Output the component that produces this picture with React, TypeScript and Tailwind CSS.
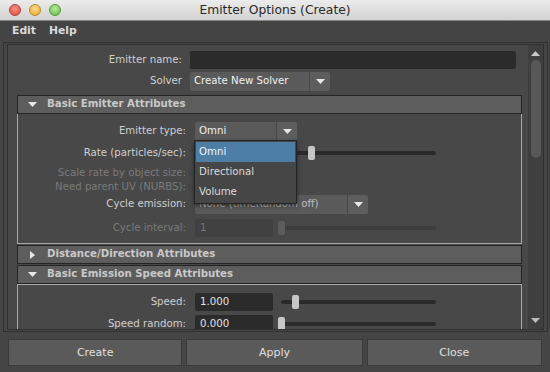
import React from "react";

const DownTri = ({ className = "" }: { className?: string }) => (
  <svg width="9" height="5" viewBox="0 0 9 5" className={className}>
    <polygon points="0,0 9,0 4.5,5" fill="#e8e8e8" />
  </svg>
);

const RightTri = () => (
  <svg width="5" height="8" viewBox="0 0 5 8">
    <polygon points="0,0 5,4 0,8" fill="#e8e8e8" />
  </svg>
);

function Slider({ thumb, disabled = false }: { thumb: number; disabled?: boolean }) {
  return (
    <div className="relative ml-[8px] h-[14px] w-[155px] flex items-center">
      <div className={`h-[4px] w-full rounded-full ${disabled ? "bg-[#3e3e3e]" : "bg-[#2a2a2a]"}`} />
      <div
        className={`absolute top-0 h-[14px] w-[7px] rounded-[2px] ${disabled ? "bg-[#5c5c5c]" : "bg-[#c6c6c6]"}`}
        style={{ left: thumb }}
      />
    </div>
  );
}

function Dropdown({ text, w, dim = false }: { text: string; w: number; dim?: boolean }) {
  return (
    <div className="flex h-[19px] gap-px">
      <div
        className={`flex items-center rounded-l-[2px] bg-[#5a5a5a] pl-[4px] ${dim ? "text-[#bdbdbd]" : "text-[#f0f0f0]"}`}
        style={{ width: w }}
      >
        {text}
      </div>
      <div className="flex w-[20px] items-center justify-center rounded-r-[2px] bg-[#5d5d5d]">
        <DownTri />
      </div>
    </div>
  );
}

function Header({ title, open }: { title: string; open: boolean }) {
  return (
    <div className="ml-[9px] flex h-[19px] w-[505px] items-center border border-[#242424] bg-[#5d5d5d] font-bold text-[#c9c9c9]">
      <div className="flex w-[29px] justify-center">{open ? <DownTri /> : <RightTri />}</div>
      <span>{title}</span>
    </div>
  );
}

function Label({ children, disabled = false }: { children: React.ReactNode; disabled?: boolean }) {
  return (
    <div className={`w-[168px] text-right ${disabled ? "text-[#7a7a7a]" : "text-[#cfcfcf]"}`}>{children}</div>
  );
}

function Field({ text, disabled = false }: { text: string; disabled?: boolean }) {
  return (
    <div
      className={`flex h-[18px] w-[78px] items-center rounded-[2px] pl-[5px] ${
        disabled ? "bg-[#414141] text-[#777]" : "bg-[#2b2b2b] text-[#e2e2e2]"
      }`}
    >
      {text}
    </div>
  );
}

export default function App() {
  return (
    <div className="h-[372px] w-[550px] overflow-hidden bg-[#454545] font-['DejaVu_Sans',sans-serif] text-[10.2px] leading-none">
      {/* Title bar */}
      <div className="grid h-[21px] grid-cols-[1fr_auto_1fr] items-center border-b border-[#8a8a8a] bg-gradient-to-b from-[#ececec] to-[#d2d2d2]">
        <div className="flex items-center gap-[8px] pl-[9px]">
          <div className="h-[12px] w-[12px] rounded-full border border-[#b0423a] bg-[radial-gradient(circle_at_50%_35%,#ff8f85,#e0443a)]" />
          <div className="h-[12px] w-[12px] rounded-full border border-[#b98a26] bg-[radial-gradient(circle_at_50%_35%,#ffd98a,#e6a42a)]" />
          <div className="h-[12px] w-[12px] rounded-full border border-[#5a9a3a] bg-[radial-gradient(circle_at_50%_35%,#b6ec98,#5fbb42)]" />
        </div>
        <div className="text-[12.3px] text-[#2a2a2a]">Emitter Options (Create)</div>
        <div />
      </div>

      {/* Menu bar */}
      <div className="flex h-[20px] items-center gap-[13px] bg-[#444] pl-[12px] pt-px text-[10.8px] font-semibold text-[#dadada]">
        <span>Edit</span>
        <span>Help</span>
      </div>

      {/* Scroll frame */}
      <div className="ml-[3px] mt-px h-[290px] w-[545px] border border-[#303030] px-[3px] py-px">
        <div className="flex h-full w-full border border-[#303030]">
          <div className="relative h-full w-[520px] overflow-hidden bg-[#484848] pt-[6px]">
            {/* Emitter name */}
            <div className="flex h-[18px] items-center">
              <div className="w-[174px] text-right text-[#cfcfcf]">Emitter name:</div>
              <div className="ml-[8px] h-[18px] w-[326px] rounded-[2px] bg-[#2b2b2b]" />
            </div>
            {/* Solver */}
            <div className="mt-[3px] flex h-[19px] items-center">
              <div className="w-[174px] text-right text-[#cfcfcf]">Solver</div>
              <div className="ml-[8px]">
                <Dropdown text="Create New Solver" w={119} />
              </div>
            </div>

            {/* Section 1 */}
            <div className="mt-[4px]">
              <Header title="Basic Emitter Attributes" open />
              <div className="relative ml-[9px] h-[130px] w-[505px] border-x border-b border-[#a9a9a9] pt-[8px]">
                <div className="flex h-[19px] items-center">
                  <Label>Emitter type:</Label>
                  <div className="ml-[9px]">
                    <Dropdown text="Omni" w={81} />
                  </div>
                </div>
                <div className="mt-[2px] flex h-[20px] items-center">
                  <Label>Rate (particles/sec):</Label>
                  <div className="ml-[9px] flex items-center">
                    <Field text="" />
                    <Slider thumb={27} />
                  </div>
                </div>
                <div className="mt-[3px] flex h-[14px] items-center">
                  <Label disabled>Scale rate by object size:</Label>
                </div>
                <div className="flex h-[14px] items-center">
                  <Label disabled>Need parent UV (NURBS):</Label>
                </div>
                <div className="mt-px flex h-[19px] items-center">
                  <Label>Cycle emission:</Label>
                  <div className="ml-[9px]">
                    <Dropdown text="None (timeRandom off)" w={152} dim />
                  </div>
                </div>
                <div className="mt-[5px] flex h-[18px] items-center">
                  <Label disabled>Cycle interval:</Label>
                  <div className="ml-[9px] flex items-center">
                    <Field text="1" disabled />
                    <Slider thumb={-3} disabled />
                  </div>
                </div>

                {/* Open dropdown list */}
                <div className="absolute left-[176px] top-[26px] flex h-[64px] w-[103px] flex-col border border-[#242424] bg-[#464646] px-px pt-px shadow-[0_2px_4px_rgba(0,0,0,0.5)]">
                  <div className="flex h-[20px] items-center bg-[#4d7ea5] pl-[3px] text-[#f4f4f4]">Omni</div>
                  <div className="flex h-[20px] items-center pl-[3px] text-[#dcdcdc]">Directional</div>
                  <div className="flex h-[20px] items-center pl-[3px] text-[#dcdcdc]">Volume</div>
                </div>
              </div>
            </div>

            {/* Section 2 */}
            <div className="mt-px">
              <Header title="Distance/Direction Attributes" open={false} />
            </div>

            {/* Section 3 */}
            <div className="mt-px">
              <Header title="Basic Emission Speed Attributes" open />
              <div className="ml-[9px] h-[80px] w-[505px] border-x border-t border-[#a9a9a9] pt-[8px]">
                <div className="flex h-[18px] items-center">
                  <Label>Speed:</Label>
                  <div className="ml-[9px] flex items-center">
                    <Field text="1.000" />
                    <Slider thumb={11} />
                  </div>
                </div>
                <div className="mt-[4px] flex h-[18px] items-center">
                  <Label>Speed random:</Label>
                  <div className="ml-[9px] flex items-center">
                    <Field text="0.000" />
                    <Slider thumb={-3} />
                  </div>
                </div>
              </div>
            </div>
          </div>

          {/* Scrollbar */}
          <div className="flex h-full w-[15px] flex-col items-center bg-[#3f3f3f] py-[6px]">
            <svg width="9" height="5" viewBox="0 0 9 5">
              <polygon points="4.5,0 9,5 0,5" fill="#c8c8c8" />
            </svg>
            <div className="mt-[4px] h-[98px] w-[10px] rounded-full bg-[#585858]" />
            <div className="flex-1" />
            <DownTri className="opacity-75" />
          </div>
        </div>
      </div>

      {/* Buttons */}
      <div className="mt-[7px] flex gap-[4px] px-[8px] text-[11px] text-[#e0e0e0]">
        <div className="flex h-[27px] w-[175px] items-center justify-center border border-[#3a3a3a] bg-[#5a5a5a]">Create</div>
        <div className="flex h-[27px] w-[177px] items-center justify-center border border-[#3a3a3a] bg-[#5a5a5a]">Apply</div>
        <div className="flex h-[27px] w-[176px] items-center justify-center border border-[#3a3a3a] bg-[#5a5a5a]">Close</div>
      </div>
    </div>
  );
}
